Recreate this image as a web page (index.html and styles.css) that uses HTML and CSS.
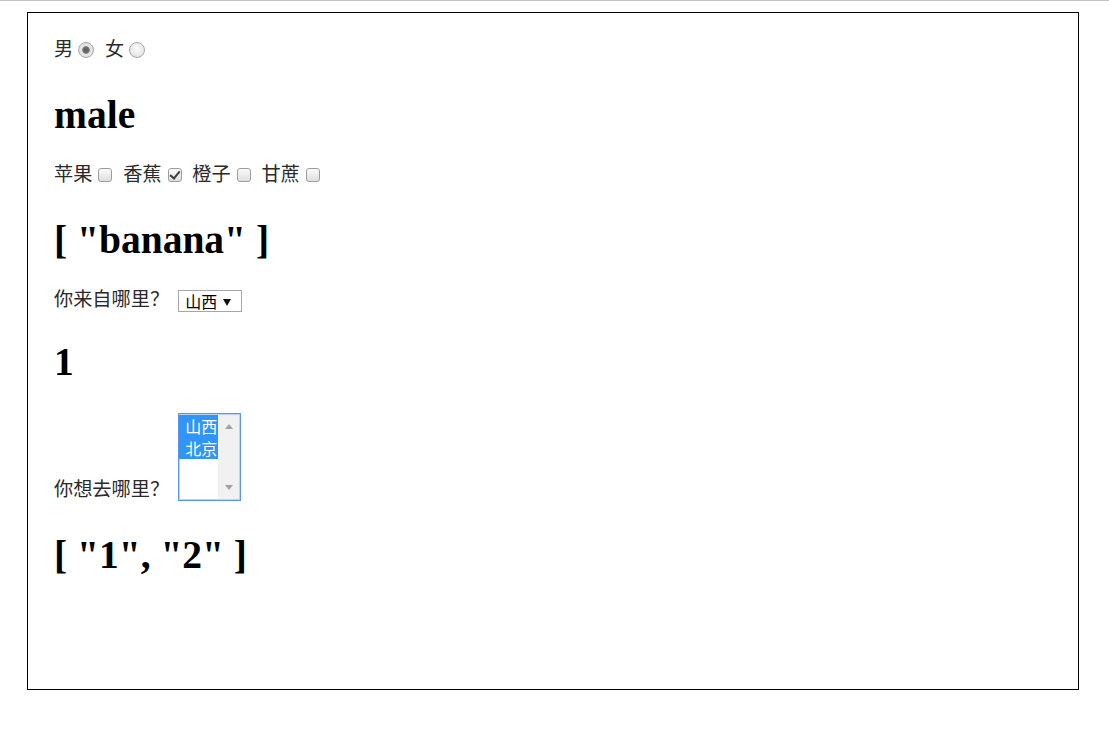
FILE: index.html
```html
<!DOCTYPE html>
<html lang="zh-CN">
<head>
<meta charset="utf-8">
<title>Vue 表单绑定</title>
<link rel="stylesheet" href="styles.css">
</head>
<body>
<div class="panel">
  <div class="row">男<input class="radio" type="radio" name="sex" value="male" checked> 女<input class="radio" type="radio" name="sex" value="female"></div>
  <h1 class="result">male</h1>
  <div class="row">苹果<input class="check" type="checkbox" value="apple"> 香蕉<input class="check" type="checkbox" value="banana" checked> 橙子<input class="check" type="checkbox" value="orange"> 甘蔗<input class="check" type="checkbox" value="sugarcane"></div>
  <h1 class="result">[ "banana" ]</h1>
  <div class="row">你来自哪里？<span class="select"><span class="select-value">山西</span><span class="select-arrow"></span></span></div>
  <h1 class="result result-tight">1</h1>
  <div class="row row-list">你想去哪里？<div class="listbox"><div class="options"><div class="option selected">山西</div><div class="option selected">北京</div></div><div class="scrollbar"><span class="arrow-up"></span><span class="arrow-down"></span></div></div></div>
  <h1 class="result">[ "1", "2" ]</h1>
</div>
</body>
</html>
```
FILE: styles.css
```css
html, body {
  margin: 0;
  padding: 0;
  background: #fff;
}
body {
  border-top: 1px solid #c3c3c3;
  font-family: "Liberation Serif", "Noto Sans CJK SC", serif;
  font-size: 19.2px;
  color: #2a2a2a;
}
.panel {
  box-sizing: border-box;
  margin: 11px 0 0 27px;
  width: 1052px;
  height: 678px;
  border: 1px solid #000;
  padding: 26px 26px 0 26px;
}
.row {
  height: 22px;
  line-height: 22px;
  white-space: nowrap;
}
.result {
  margin: 32px 0 27px;
  font-size: 39.5px;
  line-height: 44px;
  font-weight: bold;
  color: #000;
}
.result-tight {
  margin: 29px 0 27px;
}
.radio {
  -webkit-appearance: none;
  appearance: none;
  box-sizing: border-box;
  width: 16px;
  height: 16px;
  margin: 0 6px 0 5px;
  border: 1px solid #a8a8a8;
  border-radius: 50%;
  background: radial-gradient(circle at 50% 40%, #fbfbfb 0%, #e9e9e9 60%, #d8d8d8 100%);
  vertical-align: -2px;
}
.radio:checked {
  background: radial-gradient(circle at 50% 50%, #5a5a5a 0, #6a6a6a 2.5px, #8a8a8a 3.5px, #e6e6e6 4.2px, #dcdcdc 100%);
}
.check {
  -webkit-appearance: none;
  appearance: none;
  box-sizing: border-box;
  position: relative;
  width: 14px;
  height: 14px;
  margin: 0 6px 0 6px;
  border: 1px solid #9e9e9e;
  border-radius: 3px;
  background: linear-gradient(#fafafa, #dedede);
  vertical-align: -1px;
}
.check:checked::after {
  content: "";
  position: absolute;
  left: 3px;
  top: 0px;
  width: 4px;
  height: 8px;
  border-right: 2px solid #3d3d3d;
  border-bottom: 2px solid #3d3d3d;
  transform: rotate(40deg);
}
.select {
  display: inline-flex;
  align-items: center;
  box-sizing: border-box;
  width: 64px;
  height: 22px;
  margin-left: 9px;
  padding: 0 0 0 6px;
  border: 1px solid #a6a6a6;
  background: #fff;
  font-family: "Noto Sans CJK SC", "DejaVu Sans", sans-serif;
  font-size: 16px;
  line-height: 20px;
  color: #000;
  vertical-align: -2px;
}
.select-value {
  width: 38px;
}
.select-arrow {
  width: 0;
  height: 0;
  margin-top: 2px;
  border-left: 4.5px solid transparent;
  border-right: 4.5px solid transparent;
  border-top: 7px solid #111;
}
.row-list {
  height: 88px;
  margin-top: 29px;
  display: flex;
  align-items: flex-end;
}
.listbox {
  box-sizing: border-box;
  display: flex;
  width: 63px;
  height: 88px;
  margin-left: 9px;
  border: 1px solid #5d95ea;
  box-shadow: 0 0 0 1px #b9d2f7 inset;
  background: #fff;
}
.options {
  width: 39px;
  padding-top: 1px;
}
.option {
  height: 22px;
  line-height: 22px;
  padding-left: 6px;
  font-family: "Noto Sans CJK SC", "DejaVu Sans", sans-serif;
  font-size: 16px;
  color: #000;
}
.option.selected {
  background: #3094f8;
  color: #fff;
}
.scrollbar {
  width: 21px;
  background: #f1f1f1;
  display: flex;
  flex-direction: column;
  align-items: center;
  justify-content: space-between;
  padding: 9px 0 9px;
  margin: 1px 1px 1px 0;
}
.arrow-up {
  width: 0;
  height: 0;
  border-left: 4px solid transparent;
  border-right: 4px solid transparent;
  border-bottom: 5px solid #a3a3a3;
}
.arrow-down {
  width: 0;
  height: 0;
  border-left: 4px solid transparent;
  border-right: 4px solid transparent;
  border-top: 5px solid #a3a3a3;
}
```
